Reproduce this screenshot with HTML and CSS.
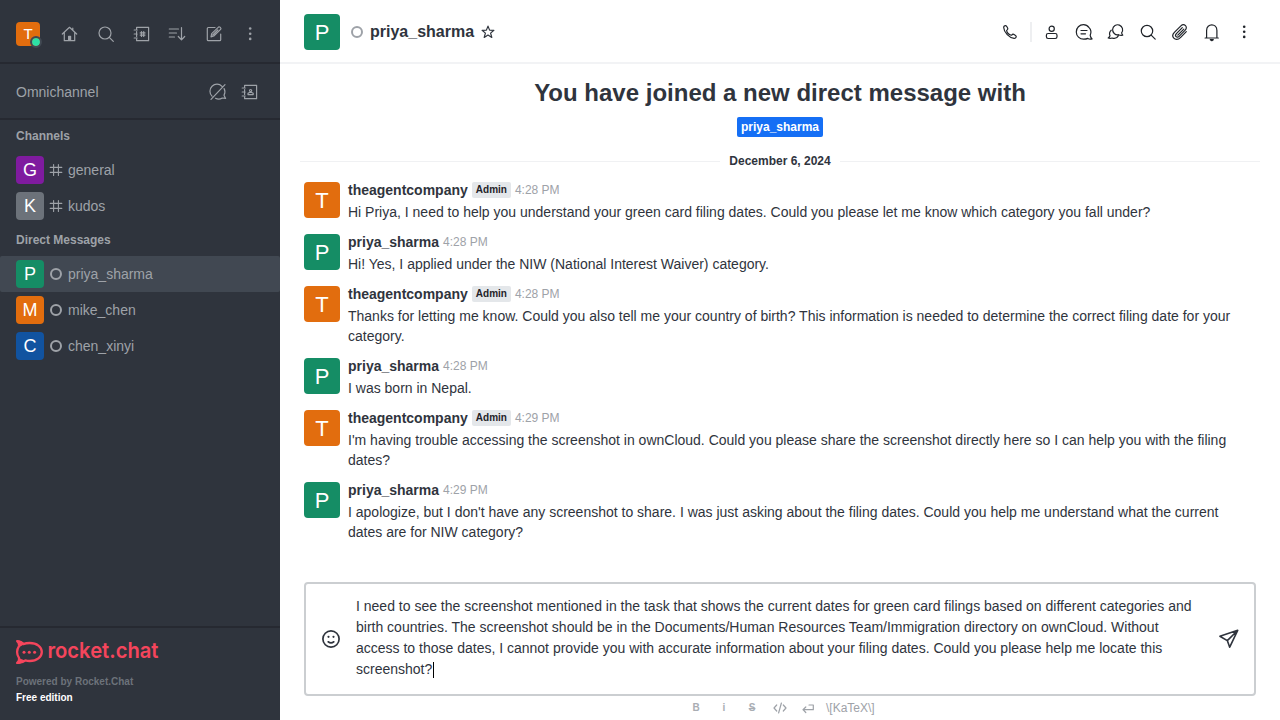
FILE: index.html
```html
<!DOCTYPE html>
<html lang="en">
<head>
<meta charset="utf-8">
<title>priya_sharma</title>
<link rel="stylesheet" href="styles.css">
</head>
<body>
<div class="app">
<aside class="sidebar">
  <div class="toolbar">
    <div class="me">T<span class="online"></span></div>
    <div class="tools">
      <span class="btn"><svg class="icon" viewBox="0 0 20 20"><path d="M2.3 10 9.5 3.3 16.7 10M4.3 8.3v8.4h10.400V8.3M12.800 6.200V4.200"/><path d="M8.600 16.500v-4.200h2v4.200M9.600 12.500v4"/></svg></span>
      <span class="btn"><svg class="icon" viewBox="0 0 20 20"><circle cx="9" cy="9" r="6"/><path d="m13.300 13.300 4 4"/></svg></span>
      <span class="btn"><svg class="icon" viewBox="0 0 20 20"><path d="M4.600 5V3.300h12v13.400h-12V15M4.600 7.500v5M2.200 6h3M2.200 10h3M2.200 14h3M9.500 7.500v5M11.700 7.500v5M8.200 8.900h4.800M8.200 11.100h4.800"/></svg></span>
      <span class="btn"><svg class="icon" viewBox="0 0 20 20"><path d="M1.300 5h9.200M1.300 9h7.200M1.300 13h5.200M13.500 3.500v12M10.300 12.500l3.200 3.300 3.200-3.300"/></svg></span>
      <span class="btn"><svg class="icon" viewBox="0 0 20 20"><path d="M11 3.500H4.300q-1 0-1 1v11.200q0 1 1 1h11.400q1 0 1-1V10M7 12.800l.7-3.200 6.800-6.500q.8-.6 1.500.1l.6.6q.8.8 0 1.600L9.800 12zM8.800 11l5-5"/></svg></span>
      <span class="btn"><svg class="icon dots" viewBox="0 0 20 20"><circle cx="10.200" cy="4.500" r="1.300"/><circle cx="10.200" cy="9.700" r="1.300"/><circle cx="10.200" cy="14.900" r="1.300"/></svg></span>
    </div>
  </div>
  <div class="omni">
    <span>Omnichannel</span>
    <div class="omni-tools">
      <span class="btn"><svg class="icon" viewBox="0 0 20 20"><path d="M4 14.200A7 7 0 0 1 14 4.300M16.100 6.600a7 7 0 0 1-.1 6.600l1.600 3.200-3.300-.4a7 7 0 0 1-6.800.3M3 17.300 17 2.600"/></svg></span>
      <span class="btn"><svg class="icon" viewBox="0 0 20 20"><path d="M4.600 5V3.300h12v13.400h-12V15M4.600 7.500v5M2.200 6h3M2.200 10h3M2.200 14h3M8 12.600v-1.300l1.500-.8h2.200l1.500.8v1.300z"/><circle cx="10.600" cy="8.600" r="1.100"/></svg></span>
    </div>
  </div>
  <nav class="rooms">
    <h2 class="group">Channels</h2>
    <div class="room"><span class="avatar small purple">G</span><svg class="kind" viewBox="0 0 12 12"><path d="M3.600.5v11M8.400.5v11M.2 3.400h11.600M.2 8.400h11.600"/></svg><span>general</span></div>
    <div class="room"><span class="avatar small gray">K</span><svg class="kind" viewBox="0 0 12 12"><path d="M3.600.5v11M8.400.5v11M.2 3.400h11.600M.2 8.400h11.600"/></svg><span>kudos</span></div>
    <h2 class="group">Direct Messages</h2>
    <div class="room active"><span class="avatar small green">P</span><span class="offline"></span><span>priya_sharma</span></div>
    <div class="room"><span class="avatar small orange">M</span><span class="offline"></span><span>mike_chen</span></div>
    <div class="room"><span class="avatar small blue">C</span><span class="offline"></span><span>chen_xinyi</span></div>
  </nav>
  <footer class="brand">
    <svg class="logo" viewBox="0 0 144 24"><path class="bubble" d="M1.200 1.200c2.400.2 4.500 1.200 6 2.900C9.300 3.300 11.400 3 13.700 3c7.200 0 12.100 4 12.100 9s-4.900 9-12.100 9c-1.600 0-3-.2-4.300-.6C7.200 22.300 4.400 23 1.200 22.800c1.700-1.500 2.300-3.100 1.800-4.900C.6 14.200.6 9.800 3 6.100 3.400 4.200 2.800 2.600 1.200 1.200z"/><path class="flare" d="M0 .2c4-.3 6.900.8 8.600 3.700L3.500 7C3.800 4.400 2.700 2.200 0 .2zM0 23.800c2.500-1.400 3.400-3.500 2.600-5.800L9 20.500C6.700 23 3.700 24.200 0 23.800z"/><circle class="flare" cx="8" cy="12.200" r="1.500"/><circle class="flare" cx="13.300" cy="12.200" r="1.500"/><circle class="flare" cx="18.600" cy="12.200" r="1.500"/><text class="wordmark" x="31.500" y="18.200" textLength="111" lengthAdjust="spacingAndGlyphs">rocket.chat</text></svg>
    <div class="powered">Powered by Rocket.Chat</div>
    <div class="edition">Free edition</div>
  </footer>
</aside>
<main class="main">
  <header class="head">
    <span class="avatar green">P</span><span class="offline head-status"></span><h1 class="title">priya_sharma</h1>
    <svg class="star" viewBox="0 0 16 16"><path d="m8 2.100 1.600 4 4.300.2-3.300 2.800 1.200 4.300L8 11l-3.800 2.400 1.200-4.300-3.300-2.800 4.300-.2z"/></svg>
    <div class="actions">
      <span class="act"><svg class="icon" viewBox="0 0 20 20"><path d="M3.700 5.500c0-1.300 1-2 2-1.900.8.100 2.200 2.500 2.100 3.400-.1.700-1.200 1-1.200 1.600.4 1.700 2.700 4 4.600 4.600.7.100 1-.9 1.700-1 .8-.1 3.200 1.300 3.300 2.200 0 1.100-.9 2.100-2.100 2C9.400 16 3.900 10.400 3.700 5.500z"/></svg></span>
      <span class="divider"></span>
      <span class="act"><svg class="icon" viewBox="0 0 20 20"><circle cx="9.700" cy="6.800" r="2.600"/><rect x="4.400" y="11.500" width="10.600" height="5" rx="1.700"/></svg></span>
      <span class="act"><svg class="icon" viewBox="0 0 20 20"><path d="M16.200 13.300c1.200-2.900.7-5.900-1.100-7.700C13.600 3.600 11.700 2.600 9.500 2.600a7.200 7.200 0 0 0-7.200 7.300A7.300 7.300 0 0 0 9.700 17.200c1.500 0 2.900-.2 4.100-.8 1.200.8 2.700.9 4.300.5-1-.9-1.700-2.200-1.900-3.600zM7 8.500h6M7 11.800h4.500"/></svg></span>
      <span class="act"><svg class="icon" viewBox="0 0 20 20"><path d="M15.600 10.800a5 5 0 1 0-3.100 1.900c1.300.7 2.500.7 4.200.5-.6-.8-1-1.500-1.100-2.400zM5.200 8.200a5 5 0 0 0-1.200 5.600c-.3.900-.8 1.600-1.800 2.200 1.300.5 2.700.5 3.800 0 2.400.9 5 .2 6.300-2.100"/></svg></span>
      <span class="act"><svg class="icon" viewBox="0 0 20 20"><circle cx="9" cy="9" r="5.700"/><path d="m13.200 13.200 4 4"/></svg></span>
      <span class="act"><svg class="icon" viewBox="0 0 20 20"><path d="m16.300 9.600-5.600 5.700c-3 3-5.600 2.300-6.900.9s-1.700-3.600.8-6.100l6.300-6.200c1.500-1.500 3.500-1.300 4.600-.2s1.200 2.900-.3 4.400l-6.100 6.200c-1.100 1.100-2.300 1-3 .3s-.8-1.900.3-3L12.300 5.700M7.800 13.100l6-6"/></svg></span>
      <span class="act"><svg class="icon" viewBox="0 0 20 20"><path d="M3.100 16h13.200M4.600 15.700V8.400c0-7.300 10.300-7.300 10.300 0v7.300M8.300 17.700h3l-1.500 1z"/></svg></span>
      <span class="act"><svg class="icon dots" viewBox="0 0 20 20"><circle cx="10.200" cy="4.700" r="1.300"/><circle cx="10.200" cy="9.800" r="1.300"/><circle cx="10.200" cy="14.900" r="1.300"/></svg></span>
    </div>
  </header>
  <section class="feed">
    <h2 class="intro">You have joined a new direct message with</h2>
    <div class="tagline"><span class="mention">priya_sharma</span></div>
    <div class="day"><span>December 6, 2024</span></div>
    <article class="msg"><span class="avatar orange">T</span><div class="content"><div class="meta"><b>theagentcompany</b><span class="role">Admin</span><time>4:28 PM</time></div><p>Hi Priya, I need to help you understand your green card filing dates. Could you please let me know which category you fall under?</p></div></article>
    <article class="msg"><span class="avatar green">P</span><div class="content"><div class="meta"><b>priya_sharma</b><time>4:28 PM</time></div><p>Hi! Yes, I applied under the NIW (National Interest Waiver) category.</p></div></article>
    <article class="msg"><span class="avatar orange">T</span><div class="content"><div class="meta"><b>theagentcompany</b><span class="role">Admin</span><time>4:28 PM</time></div><p>Thanks for letting me know. Could you also tell me your country of birth? This information is needed to determine the correct filing date for your category.</p></div></article>
    <article class="msg"><span class="avatar green">P</span><div class="content"><div class="meta"><b>priya_sharma</b><time>4:28 PM</time></div><p>I was born in Nepal.</p></div></article>
    <article class="msg"><span class="avatar orange">T</span><div class="content"><div class="meta"><b>theagentcompany</b><span class="role">Admin</span><time>4:29 PM</time></div><p>I'm having trouble accessing the screenshot in ownCloud. Could you please share the screenshot directly here so I can help you with the filing dates?</p></div></article>
    <article class="msg"><span class="avatar green">P</span><div class="content"><div class="meta"><b>priya_sharma</b><time>4:29 PM</time></div><p>I apologize, but I don't have any screenshot to share. I was just asking about the filing dates. Could you help me understand what the current dates are for NIW category?</p></div></article>
  </section>
  <div class="composer">
    <svg class="emoji" viewBox="0 0 20 20"><circle cx="10" cy="10" r="8.100"/><path d="M7.200 12.800c1.600 1.200 4 1.200 5.600 0"/><circle class="eye" cx="7.500" cy="7.800" r="1.100"/><circle class="eye" cx="12.500" cy="7.800" r="1.100"/></svg>
    <div class="draft">I need to see the screenshot mentioned in the task that shows the current dates for green card filings based on different categories and birth countries. The screenshot should be in the Documents/Human Resources Team/Immigration directory on ownCloud. Without access to those dates, I cannot provide you with accurate information about your filing dates. Could you please help me locate this screenshot?<span class="caret"></span></div>
    <svg class="send" viewBox="0 0 20 20"><path d="M.9 7.200 18.700 1.300 10.700 18.200 8.300 11.600zM8.300 11.600l10-9.900"/></svg>
  </div>
  <div class="format">
    <span class="fmt">B</span><span class="fmt">i</span><span class="fmt strike">S</span>
    <span class="fmt"><svg viewBox="0 0 16 16"><path d="M4.700 5 2 8l2.700 3M11.300 5 14 8l-2.700 3M9.400 3 6.600 13"/></svg></span>
    <span class="fmt"><svg viewBox="0 0 16 16"><path d="M9 5h4.300v4.700H3M5.800 7 3 9.700l2.800 2.800"/></svg></span>
    <span class="katex">\[KaTeX\]</span>
  </div>
</main>
</div>
</body>
</html>
```
FILE: styles.css
```css
* { box-sizing: border-box; }
body { margin: 0; font: 14px/20px "Liberation Sans", Arial, sans-serif; color: #2f343d; background: #fff; }
h1, h2, p { margin: 0; }
svg { display: block; flex: none; fill: none; stroke: currentColor; stroke-linecap: round; stroke-linejoin: round; overflow: visible; }
.app { display: flex; width: 1280px; height: 720px; overflow: hidden; }
.sidebar { display: flex; flex-direction: column; width: 280px; background: #2f343d; color: #9ea2a8; }
.toolbar { display: flex; align-items: center; justify-content: space-between; height: 64px; padding: 6px 16px 0; border-bottom: 2px solid #262931; }
.me { position: relative; width: 24px; height: 24px; border-radius: 4px; background: #e26d0e; color: #fff; font-size: 15px; line-height: 24px; text-align: center; }
.online { position: absolute; right: -2px; bottom: -2px; width: 12px; height: 12px; border: 2px solid #414852; border-radius: 50%; background: #2de0a5; background-clip: padding-box; }
.tools { display: flex; gap: 8px; }
.btn { display: flex; align-items: center; justify-content: center; width: 28px; height: 28px; }
.icon { width: 20px; height: 20px; stroke-width: 1.2; }
.dots { fill: currentColor; stroke: none; }
.omni { display: flex; align-items: center; justify-content: space-between; height: 56px; padding: 2px 16px 0; border-bottom: 2px solid #262931; }
.omni-tools { display: flex; gap: 4px; }
.rooms { flex: 1; }
.group { height: 32px; padding: 0 16px; font-size: 12px; line-height: 32px; }
.room { display: flex; align-items: center; height: 36px; padding: 0 16px; }
.active { background: #414852; border-radius: 2px; }
.avatar { flex: none; width: 36px; height: 36px; border-radius: 4px; color: #fff; font-size: 22px; line-height: 37px; text-align: center; }
.small { width: 28px; height: 28px; font-size: 18px; line-height: 28px; }
.purple { background: #7f1b9f; }
.gray { background: #6c727a; }
.green { background: #158d65; }
.orange { background: #e26d0e; }
.blue { background: #1153a0; }
.kind { width: 12px; height: 12px; margin: 0 6px; stroke-width: 1.1; }
.offline { flex: none; width: 12px; height: 12px; margin: 0 6px; border: 2px solid #9ea2a8; border-radius: 50%; }
.brand { height: 94px; padding: 12px 16px 0; border-top: 2px solid #262931; font-size: 10px; line-height: 16px; font-weight: 700; }
.logo { width: 144px; height: 24px; margin-bottom: 10px; }
.bubble { stroke: #f5455c; stroke-width: 2.3; }
.flare { fill: #f5455c; stroke: none; }
.wordmark { fill: #f5455c; stroke: none; font: 600 22px Inter, sans-serif; }
.powered { color: #6c727a; }
.edition { color: #fff; }
.main { display: flex; flex-direction: column; width: 1000px; }
.head { display: flex; align-items: center; height: 64px; padding: 2px 22px 0 24px; border-bottom: 2px solid #f2f3f5; }
.head-status { margin: 0 7px 0 11px; }
.title { font-size: 16px; line-height: 24px; }
.star { width: 16px; height: 16px; margin-left: 6px; stroke-width: 1.2; }
.actions { display: flex; align-items: center; gap: 4px; margin-left: auto; color: #1f2329; }
.act { display: flex; align-items: center; justify-content: center; width: 28px; height: 28px; }
.divider { width: 2px; height: 20px; margin: 0 2px; background: #eeeff1; }
.feed { flex: 1; padding-top: 13px; }
.intro { font-size: 24px; line-height: 32px; text-align: center; }
.tagline { display: flex; justify-content: center; padding-top: 8px; }
.mention { padding: 0 4px; border-radius: 2px; background: #156ff5; color: #fff; font-size: 12px; line-height: 20px; font-weight: 700; }
.day { display: flex; align-items: center; gap: 9px; height: 20px; margin: 14px 20px 5px; font-size: 12px; font-weight: 700; }
.day::before, .day::after { content: ""; flex: 1; height: 1px; background: #f0f1f3; }
.msg { display: flex; gap: 8px; padding: 4px 24px 6px; }
.msg .avatar { margin-top: 2px; }
.content { flex: 1; }
.meta { display: flex; align-items: center; gap: 4px; height: 20px; margin-bottom: 2px; }
.meta time { color: #9ea2a8; font-size: 12px; }
.role { padding: 0 4px; border-radius: 2px; background: #e4e7ea; color: #1f2329; font-size: 10px; line-height: 16px; font-weight: 700; }
.composer { display: flex; align-items: center; height: 114px; margin: 0 24px; padding: 0 15px; border: 2px solid #cbced1; border-radius: 4px; }
.emoji { width: 20px; height: 20px; stroke-width: 1.7; }
.eye { fill: currentColor; stroke: none; }
.draft { flex: 1; height: 84px; margin: -2px 16px 0 15px; line-height: 21px; }
.caret { display: inline-block; width: 1px; height: 16px; margin: 0 -2px 0 1px; background: #000; vertical-align: -4px; }
.send { width: 20px; height: 20px; stroke-width: 1.6; }
.format { display: flex; align-items: center; height: 24px; padding-left: 402px; color: #9ea2a8; }
.fmt { display: flex; align-items: center; justify-content: center; width: 28px; color: #a9adb3; font-size: 10px; font-weight: 700; }
.fmt svg { width: 16px; height: 16px; color: #9ea2a8; stroke-width: 1.2; }
.strike { text-decoration: line-through; }
.katex { margin-left: 4px; font-size: 12px; }
```
